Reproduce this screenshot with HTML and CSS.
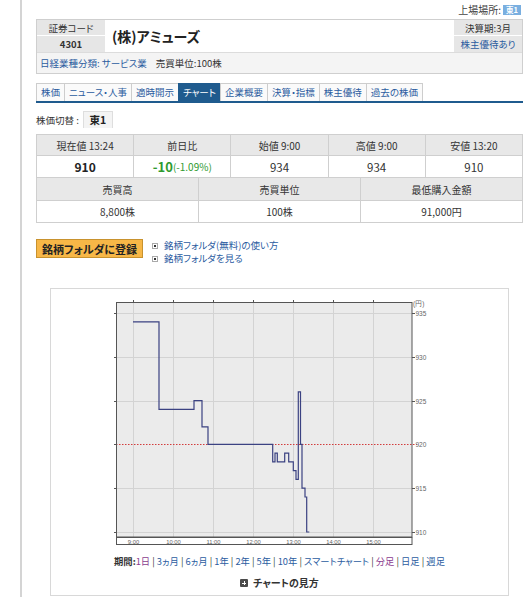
FILE: index.html
```html
<!DOCTYPE html>
<html lang="ja">
<head>
<meta charset="utf-8">
<title>(株)アミューズ チャート</title>
<link rel="stylesheet" href="styles.css">
</head>
<body>
<div class="page">
  <div class="market"><span>上場場所:</span><span class="badge">東1</span></div>

  <div class="hdr">
    <div class="hl hl-1">証券コード</div>
    <div class="name">(株)アミューズ</div>
    <div class="hr hr-1">決算期:3月</div>
    <div class="hl hl-2 code">4301</div>
    <div class="hr hr-2"><a class="lnk">株主優待あり</a></div>
    <div class="ind"><a class="lnk">日経業種分類: サービス業</a><span>売買単位:100株</span></div>
  </div>

  <div class="tabs">
    <a class="tab">株価</a>
    <a class="tab">ニュース・人事</a>
    <a class="tab">適時開示</a>
    <a class="tab active">チャート</a>
    <a class="tab">企業概要</a>
    <a class="tab">決算・指標</a>
    <a class="tab">株主優待</a>
    <a class="tab">過去の株価</a>
  </div>

  <div class="switch">
    <span class="switch-label">株価切替 :</span>
    <span class="switch-box">東1</span>
  </div>

  <div class="stats five">
    <div class="th">現在値 13:24</div>
    <div class="th">前日比</div>
    <div class="th">始値 9:00</div>
    <div class="th">高値 9:00</div>
    <div class="th">安値 13:20</div>
    <div class="td strong">910</div>
    <div class="td"><span class="chg">-10</span><span class="chgp">(-1.09%)</span></div>
    <div class="td">934</div>
    <div class="td">934</div>
    <div class="td">910</div>
  </div>
  <div class="stats three">
    <div class="th">売買高</div>
    <div class="th">売買単位</div>
    <div class="th">最低購入金額</div>
    <div class="td sm">8,800株</div>
    <div class="td sm">100株</div>
    <div class="td sm">91,000円</div>
  </div>

  <div class="folder">
    <a class="folder-btn">銘柄フォルダに登録</a>
    <ul class="folder-links">
      <li><span class="bul"></span><a class="lnk">銘柄フォルダ(無料)の使い方</a></li>
      <li><span class="bul"></span><a class="lnk">銘柄フォルダを見る</a></li>
    </ul>
  </div>

  <div class="chart-box">
    <svg class="chart-svg" width="457" height="262" viewBox="0 0 457 262">
      <rect x="65" y="13" width="296" height="235" fill="#ebebeb"/>
      <g stroke="#d3d3d3" stroke-width="1">
        <line x1="82.5" y1="13" x2="82.5" y2="248"/>
        <line x1="122.5" y1="13" x2="122.5" y2="248"/>
        <line x1="162.5" y1="13" x2="162.5" y2="248"/>
        <line x1="202.5" y1="13" x2="202.5" y2="248"/>
        <line x1="242.5" y1="13" x2="242.5" y2="248"/>
        <line x1="282.5" y1="13" x2="282.5" y2="248"/>
        <line x1="322.5" y1="13" x2="322.5" y2="248"/>
        <line x1="65" y1="24.5" x2="361" y2="24.5"/>
        <line x1="65" y1="68.5" x2="361" y2="68.5"/>
        <line x1="65" y1="112.5" x2="361" y2="112.5"/>
        <line x1="65" y1="199.5" x2="361" y2="199.5"/>
        <line x1="65" y1="243.5" x2="361" y2="243.5"/>
      </g>
      <line x1="65" y1="155.5" x2="366" y2="155.5" stroke="#d23c3c" stroke-width="1" stroke-dasharray="1.5,1.5"/>
      <polyline fill="none" stroke="#3b4282" stroke-width="1.2" points="82,32.8 108,32.8 108,120.4 143,120.4 143,111.6 151,111.6 151,137.9 157,137.9 157,155.4 221.7,155.4 221.7,172.9 224,172.9 224,164.2 226.3,164.2 226.3,172.9 233.7,172.9 233.7,164.2 237.7,164.2 237.7,172.9 242.3,172.9 242.3,181.7 245,181.7 245,190.4 247.3,190.4 247.3,102.8 249.5,102.8 249.5,155.4 251,155.4 251,199.2 254,199.2 254,208 255.7,208 255.7,243 258.3,243"/>
      <rect x="65.5" y="13.5" width="295.5" height="234.5" fill="none" stroke="#555" stroke-width="1"/>
      <g stroke="#555" stroke-width="1">
        <line x1="82.5" y1="11" x2="82.5" y2="13"/>
        <line x1="122.5" y1="11" x2="122.5" y2="13"/>
        <line x1="162.5" y1="11" x2="162.5" y2="13"/>
        <line x1="202.5" y1="11" x2="202.5" y2="13"/>
        <line x1="242.5" y1="11" x2="242.5" y2="13"/>
        <line x1="282.5" y1="11" x2="282.5" y2="13"/>
        <line x1="322.5" y1="11" x2="322.5" y2="13"/>
        <line x1="63" y1="24.5" x2="65" y2="24.5"/>
        <line x1="63" y1="68.5" x2="65" y2="68.5"/>
        <line x1="63" y1="112.5" x2="65" y2="112.5"/>
        <line x1="63" y1="155.5" x2="65" y2="155.5"/>
        <line x1="63" y1="199.5" x2="65" y2="199.5"/>
        <line x1="63" y1="243.5" x2="65" y2="243.5"/>
        <line x1="361" y1="24.5" x2="364" y2="24.5"/>
        <line x1="361" y1="68.5" x2="364" y2="68.5"/>
        <line x1="361" y1="112.5" x2="364" y2="112.5"/>
        <line x1="361" y1="199.5" x2="364" y2="199.5"/>
        <line x1="361" y1="243.5" x2="364" y2="243.5"/>
      </g>
      <g class="ax" font-size="6.5" fill="#666">
        <text x="362" y="17">(円)</text>
        <text x="364.5" y="27">935</text>
        <text x="364.5" y="71">930</text>
        <text x="364.5" y="115">925</text>
        <text x="364.5" y="158">920</text>
        <text x="364.5" y="202">915</text>
        <text x="364.5" y="246">910</text>
      </g>
      <rect x="65.5" y="248.5" width="295.5" height="7" fill="#fff" stroke="#555" stroke-width="1"/>
      <g class="ax" font-size="5.8" fill="#666" text-anchor="middle">
        <text x="82.5" y="254.5">9:00</text>
        <text x="122.5" y="254.5">10:00</text>
        <text x="162.5" y="254.5">11:00</text>
        <text x="202.5" y="254.5">12:00</text>
        <text x="242.5" y="254.5">13:00</text>
        <text x="282.5" y="254.5">14:00</text>
        <text x="322.5" y="254.5">15:00</text>
      </g>
    </svg>
    <div class="periods"><b>期間:</b><a class="lnk v">1日</a> | <a class="lnk">3ヵ月</a> | <a class="lnk">6ヵ月</a> | <a class="lnk">1年</a> | <a class="lnk">2年</a> | <a class="lnk">5年</a> | <a class="lnk">10年</a> | <a class="lnk">スマートチャート</a> | <a class="lnk v">分足</a> | <a class="lnk">日足</a> | <a class="lnk">週足</a></div>
    <div class="howto"><span class="plus-sq"></span>チャートの見方</div>
  </div>
</div>
</body>
</html>
```

FILE: styles.css
```css
* { box-sizing: border-box; }
html, body { margin: 0; padding: 0; background: #fff; }
body {
  font-family: "Noto Sans CJK JP", "Noto Sans", sans-serif;
  font-size: 10px;
  color: #333;
  font-feature-settings: "palt";
}
a { text-decoration: none; cursor: pointer; }
.lnk { color: #2b5c9f; }
.lnk.v { color: #8a3c8e; }

.page {
  margin-left: 20px;
  border-left: 2px solid #d4d4d4;
  padding: 0 7px 0 14px;
  min-height: 597px;
}

.market {
  height: 19px;
  display: flex;
  justify-content: flex-end;
  align-items: center;
  gap: 2px;
  padding-right: 2px;
  font-size: 10px;
  color: #444;
}
.badge {
  background: #7aafe0;
  color: #fff;
  font-size: 7.5px;
  line-height: 10px;
  padding: 0 3px;
  font-weight: bold;
}

.hdr {
  display: grid;
  grid-template-columns: 68px 1fr 68px;
  grid-template-rows: 16px 16px 21px;
  grid-template-areas: "a n c" "b n d" "e e e";
  border: 1px solid #cfcfcf;
}
.hl, .hr {
  background: #e6e6e6;
  display: flex;
  align-items: center;
  justify-content: center;
  font-size: 9.5px;
}
.hl-1 { grid-area: a; border-bottom: 1px solid #fff; }
.hl-2 { grid-area: b; }
.hr-1 { grid-area: c; border-bottom: 1px solid #fff; }
.hr-2 { grid-area: d; }
.code { font-weight: bold; font-size: 9.5px; }
.name {
  grid-area: n;
  display: flex;
  align-items: center;
  padding-left: 7px;
  font-size: 14px;
  font-weight: bold;
  color: #222;
}
.ind {
  grid-area: e;
  background: #f4f4f4;
  border-top: 1px solid #dcdcdc;
  display: flex;
  align-items: center;
  gap: 9px;
  padding-left: 3px;
  font-size: 9.5px;
}

.tabs {
  margin-top: 9px;
  display: flex;
  border-bottom: 2px solid #1f5b8e;
}
.tab {
  height: 18px;
  line-height: 17px;
  padding: 0 4px;
  border: 1px solid #cdcdcd;
  border-bottom: 0;
  border-right: 0;
  background: #fafafa;
  color: #2b5c9f;
  font-size: 9.5px;
  white-space: nowrap;
}
.tab:last-child { border-right: 1px solid #cdcdcd; }
.tab.active { background: #1f5b8e; border-color: #1f5b8e; color: #fff; }

.switch {
  margin-top: 8px;
  display: flex;
  align-items: flex-end;
  height: 17px;
}
.switch-label {
  white-space: nowrap;
  margin-right: 4px;
  line-height: 15px;
  font-size: 9.5px;
}
.switch-box {
  width: 30px;
  height: 17px;
  line-height: 16px;
  text-align: center;
  border: 1px solid #dedede;
  border-bottom: 0;
  background: #f4f4f4;
  font-weight: bold;
  font-size: 10.5px;
  color: #222;
}

.stats {
  display: grid;
  border-left: 1px solid #cfcfcf;
}
.stats.five { grid-template-columns: repeat(5, 1fr); margin-top: 6px; border-top: 1px solid #cfcfcf; }
.stats.three { grid-template-columns: repeat(3, 1fr); }
.th, .td {
  border-right: 1px solid #cfcfcf;
  border-bottom: 1px solid #cfcfcf;
  display: flex;
  align-items: center;
  justify-content: center;
}
.five .th, .five .td { height: 22px; }
.five .th { height: 21px; }
.three .th { height: 23px; }
.three .td { height: 22px; }
.th { background: #e8e8e8; font-size: 10px; color: #333; }
.td { background: #fff; font-size: 11.5px; color: #333; }
.td.strong { font-weight: bold; font-size: 12px; color: #222; }
.td.sm { font-size: 10px; }
.chg { color: #2f9a2f; font-weight: bold; font-size: 13px; }
.chgp { color: #2f9a2f; font-size: 10px; }

.folder {
  margin-top: 16px;
  display: flex;
  gap: 9px;
  align-items: flex-start;
}
.folder-btn {
  width: 107px;
  height: 19px;
  display: flex;
  align-items: center;
  justify-content: center;
  background: #f7b747;
  border: 1px solid #c8922e;
  color: #222;
  font-weight: bold;
  font-size: 11px;
}
.folder-links {
  list-style: none;
  margin: 0;
  padding: 0;
  line-height: 13px;
  font-size: 9.5px;
}
.folder-links li { display: flex; align-items: center; gap: 6px; height: 13px; }
.bul {
  position: relative;
  width: 6px;
  height: 6px;
  border: 1px solid #aaa;
  background: #fff;
}
.bul::before {
  content: "";
  position: absolute;
  left: 1px;
  top: 1px;
  width: 2px;
  height: 2px;
  background: #333;
}

.chart-box {
  margin: 23px 14px 0;
  border: 1px solid #d8d8d8;
  padding-bottom: 5px;
}
.chart-svg { display: block; }
.ax { font-family: "Liberation Sans", "DejaVu Sans", sans-serif; }
.periods {
  margin-top: 3px;
  line-height: 14px;
  text-align: center;
  font-size: 9.3px;
  color: #333;
}
.periods b { font-weight: bold; color: #333; }
.howto {
  margin-top: 8px;
  line-height: 14px;
  display: flex;
  justify-content: center;
  align-items: center;
  gap: 5px;
  font-weight: bold;
  font-size: 10px;
  color: #333;
}
.plus-sq {
  position: relative;
  width: 8px;
  height: 8px;
  background: #4a4a4a;
  border-radius: 1px;
}
.plus-sq::before, .plus-sq::after {
  content: "";
  position: absolute;
  background: #fff;
}
.plus-sq::before { left: 2px; top: 3.5px; width: 4px; height: 1px; }
.plus-sq::after { left: 3.5px; top: 2px; width: 1px; height: 4px; }
```
